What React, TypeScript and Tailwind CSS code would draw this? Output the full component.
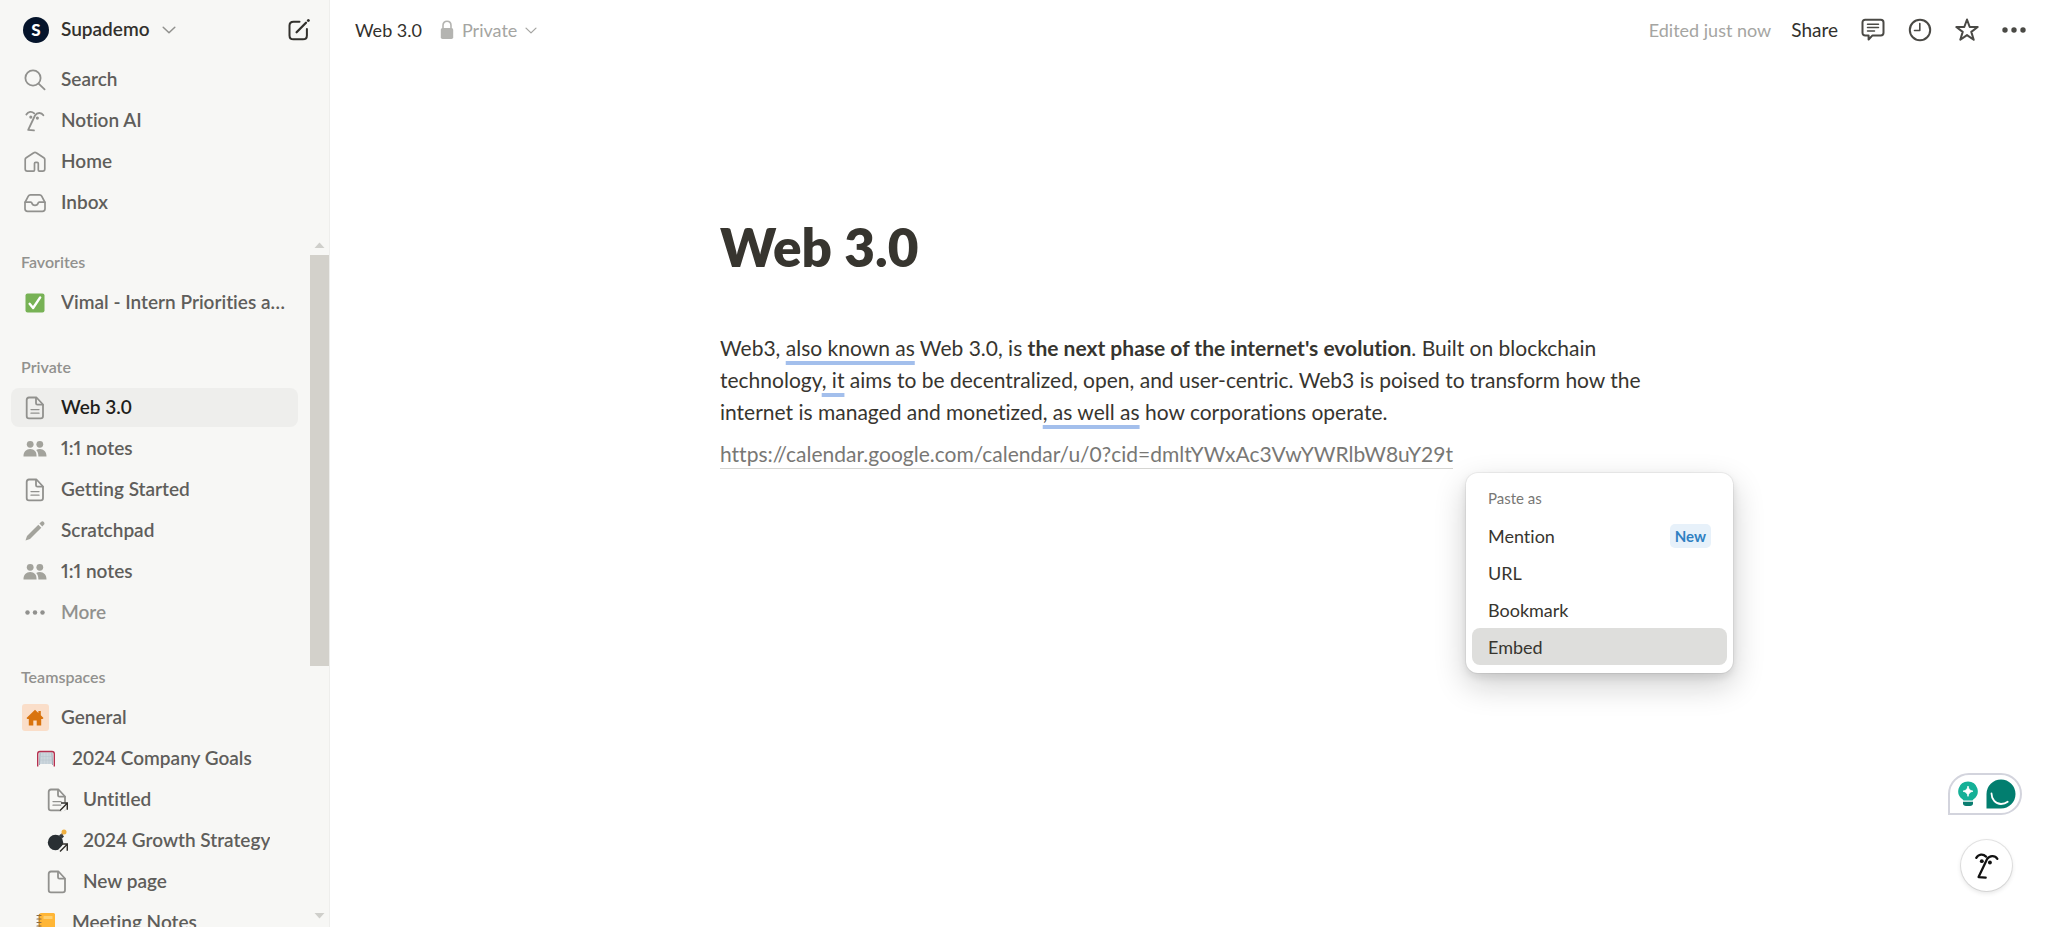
import type { ReactNode } from "react";

type IconProps = { className?: string };

function FaceIcon({ className = "" }: IconProps) {
  return (
    <svg viewBox="0 0 74 84" className={className} fill="none" stroke="currentColor" strokeWidth="7" strokeLinecap="round" strokeLinejoin="round" aria-hidden="true">
      <path d="M4 17C11 5 25 4 34 13" />
      <path d="M69 20C61 8 45 9 37 21L11 76L33 78" />
      <circle cx="21" cy="27" r="6" fill="currentColor" stroke="none" />
      <circle cx="46" cy="31" r="6" fill="currentColor" stroke="none" />
    </svg>
  );
}

function SearchIcon() {
  return (
    <svg viewBox="0 0 22 22" className="size-[22px]" fill="none" stroke="currentColor" strokeWidth="1.8" strokeLinecap="round" aria-hidden="true">
      <circle cx="9" cy="9" r="7.6" />
      <path d="M14.6 14.6L20.6 20.4" />
    </svg>
  );
}

function HomeIcon() {
  return (
    <svg viewBox="0 0 22 22" className="size-[22px]" fill="none" stroke="currentColor" strokeWidth="1.7" strokeLinejoin="round" strokeLinecap="round" aria-hidden="true">
      <path d="M1.2 8.6c0-.8.4-1.5 1-1.9L9.8 1.7c.7-.5 1.7-.5 2.400 0l7.600 5c.6.4 1 1.100 1 1.900v9.400c0 1.200-.9 2.100-2.100 2.100h-3.400c-.6 0-1-.4-1-1v-6.600c0-.8-.4-1.200-1.200-1.200h-1.400c-.8 0-1.200.4-1.200 1.200v6.600c0 .6-.4 1-1 1H3.300c-1.200 0-2.100-.9-2.100-2.100z" />
    </svg>
  );
}

function InboxIcon() {
  return (
    <svg viewBox="0 0 22 22" className="size-[22px]" fill="none" stroke="currentColor" strokeWidth="1.7" strokeLinejoin="round" strokeLinecap="round" aria-hidden="true">
      <path d="M1 10.500 4.300 4.200c.5-1 1.200-1.400 2.200-1.400h9c1 0 1.700.4 2.200 1.400L21 10.500v6.200c0 1.700-1 2.600-2.600 2.600H3.600C2 19.300 1 18.400 1 16.700z" />
      <path d="M1.200 10.200h5.600c.6 0 .9.400 1 .9.400 1.400 1.600 2.300 3.200 2.300s2.800-.9 3.200-2.300c.1-.5.4-.9 1-.9h5.600" />
    </svg>
  );
}

function PageIcon({ lines = true, arrow = false }: { lines?: boolean; arrow?: boolean }) {
  return (
    <svg viewBox="0 0 22 24" className="h-6 w-[22px]" fill="none" stroke="currentColor" strokeWidth="1.8" strokeLinejoin="round" strokeLinecap="round" aria-hidden="true">
      <path d="M5 1.500h7.500L19 8.500v11.500c0 1.500-.8 2.400-2.300 2.400H5c-1.500 0-2.300-.9-2.300-2.400V3.900C2.700 2.400 3.500 1.500 5 1.500z" />
      <path d="M12 1.800v5.400c0 1 .5 1.500 1.500 1.500h5.200" />
      {lines && <path d="M7 13.600h8M7 17.200h8" strokeWidth="1.300" />}
      {arrow && <ShortcutArrow />}
    </svg>
  );
}

function ShortcutArrow() {
  return (
    <g strokeLinecap="butt" strokeLinejoin="miter">
      <path d="M14.500 22.500 21 16" stroke="#f7f7f5" strokeWidth="6" />
      <path d="M14 22.500 21 15.500M15 15h6.300v6.800" fill="none" stroke="#32302c" strokeWidth="1.500" />
    </g>
  );
}

function PeopleIcon() {
  return (
    <svg viewBox="0 0 24 18" className="h-[18px] w-6" fill="#a3a39c" aria-hidden="true">
      <circle cx="7.200" cy="4.300" r="3.400" />
      <circle cx="16.800" cy="4.300" r="3.400" />
      <path d="M.5 16.500c0-4.600 2.700-7.400 6.700-7.400 2.200 0 3.700.8 4.800 2 1.200 1.300 1.500 3.200 1.600 5.400z" />
      <path d="M23.500 16.500c0-4.600-2.700-7.400-6.700-7.400-1.400 0-2.600.3-3.600.9 1.500 1.600 2.200 3.800 2.200 6.500z" />
    </svg>
  );
}

function PencilIcon() {
  return (
    <svg viewBox="0 0 22 22" className="size-[22px]" fill="#a3a39c" aria-hidden="true">
      <path d="M1.500 20.500 3 16 14.300 4.700l3 3L6 19z" />
      <path d="M15.400 3.600 17 2c.9-.9 2-.9 2.800 0 .9.900.9 2 .1 2.800l-1.600 1.700z" />
    </svg>
  );
}

function DotsIcon({ className = "" }: IconProps) {
  return (
    <svg viewBox="0 0 24 6" className={className} fill="currentColor" aria-hidden="true">
      <circle cx="3" cy="3" r="2.700" />
      <circle cx="12" cy="3" r="2.700" />
      <circle cx="21" cy="3" r="2.700" />
    </svg>
  );
}

function CheckBadge() {
  return (
    <svg viewBox="0 0 20 20" className="size-5" aria-hidden="true">
      <rect x=".5" y=".5" width="19" height="19" rx="2" fill="#77b255" />
      <path d="M4.600 10.800 8.100 15 15.200 4.400" fill="none" stroke="#fff" strokeWidth="2.400" strokeLinecap="round" strokeLinejoin="round" />
    </svg>
  );
}

function HouseBadge() {
  return (
    <span className="flex size-[27px] items-center justify-center rounded-[3px] bg-[#fadec9]">
      <svg viewBox="0 0 18 18" className="size-[18px]" fill="#d9730d" aria-hidden="true">
        <path d="M9 .8 12.400 4V2h2.400v4.300l2.700 2.600-.9 1h-1.400v6.600h-4.500v-5H7.300v5H2.800V9.900H1.400l-.9-1z" />
      </svg>
    </span>
  );
}

function GoalIcon() {
  return (
    <svg viewBox="0 0 20 20" className="size-5" aria-hidden="true">
      <path d="M4 3h12l.5 12h-13z" fill="#ccd6dd" />
      <path d="M4 3.500 3.500 16M16 3.500 16.500 16" stroke="#99aab5" strokeWidth="1" />
      <path d="M7 4v11M10 4v11M13 4v11M4 7.500h12M4 11h12" stroke="#b9c6cf" strokeWidth=".6" />
      <path d="M1.700 17.500V4.800c0-1.500.8-2.300 2.300-2.300h12c1.500 0 2.300.8 2.300 2.300v12.700" fill="none" stroke="#b5304f" strokeWidth="1.400" />
    </svg>
  );
}

function BombIcon() {
  return (
    <svg viewBox="0 0 22 24" className="h-6 w-[22px]" aria-hidden="true">
      <path d="M13 6.500 15.500 4.500 18 7.500 16 9.500z" fill="#31373d" />
      <circle cx="9.500" cy="13.500" r="7.700" fill="#292f33" />
      <path d="M15.500 6 17.500 3.500" stroke="#77624a" strokeWidth="1.500" />
      <circle cx="18" cy="3" r="2.500" fill="#f0b040" />
      <ShortcutArrow />
    </svg>
  );
}

function NotebookIcon() {
  return (
    <svg viewBox="0 0 22 22" className="size-[22px]" aria-hidden="true">
      <rect x="3.500" y="1.500" width="16.500" height="20" rx="2" fill="#d99220" />
      <rect x="5" y="1" width="15" height="18" rx="1.500" fill="#ffb636" />
      <rect x="8.500" y="4" width="9" height="3" rx=".5" fill="#ffd071" />
      <path d="M2 3.500h4M2 7h4M2 10.500h4M2 14h4M2 17.500h4" stroke="#8a6a45" strokeWidth="1.200" strokeLinecap="round" />
    </svg>
  );
}

function ChevronDown({ className = "" }: IconProps) {
  return (
    <svg viewBox="0 0 14 8" className={className} fill="none" stroke="currentColor" strokeWidth="1.500" strokeLinecap="round" strokeLinejoin="round" aria-hidden="true">
      <path d="M1.200 1.200 7 6.800l5.800-5.600" />
    </svg>
  );
}

function ComposeIcon() {
  return (
    <svg viewBox="0 0 22 22" className="size-[22px]" fill="none" stroke="#32302c" strokeWidth="2" strokeLinecap="round" strokeLinejoin="round" aria-hidden="true">
      <path d="M11.500 2.700H5.500C3.100 2.700 1.500 4.200 1.500 6.600v9.800c0 2.400 1.600 3.900 4 3.900h9.400c2.400 0 4-1.500 4-3.900V10" />
      <path d="M8.600 13.200 18 3.800" strokeWidth="2.300" />
      <path d="M20.300 1.600 20.400 1.500" strokeWidth="2.800" />
    </svg>
  );
}

type Item = { label: string; icon: ReactNode; depth?: 0 | 1 | 2; active?: boolean; muted?: boolean; narrowDigits?: boolean };

const shortcuts: Item[] = [
  { label: "Search", icon: <SearchIcon /> },
  { label: "Notion AI", icon: <FaceIcon className="h-[22px] w-5" /> },
  { label: "Home", icon: <HomeIcon /> },
  { label: "Inbox", icon: <InboxIcon /> },
];

const privatePages: Item[] = [
  { label: "Web 3.0", icon: <PageIcon />, active: true },
  { label: "1:1 notes", icon: <PeopleIcon />, narrowDigits: true },
  { label: "Getting Started", icon: <PageIcon /> },
  { label: "Scratchpad", icon: <PencilIcon /> },
  { label: "1:1 notes", icon: <PeopleIcon />, narrowDigits: true },
  { label: "More", icon: <DotsIcon className="h-[5px] w-5" />, muted: true },
];

const teamPages: Item[] = [
  { label: "General", icon: <HouseBadge /> },
  { label: "2024 Company Goals", icon: <GoalIcon />, depth: 1 },
  { label: "Untitled", icon: <PageIcon arrow />, depth: 2 },
  { label: "2024 Growth Strategy", icon: <BombIcon />, depth: 2 },
  { label: "New page", icon: <PageIcon lines={false} />, depth: 2 },
  { label: "Meeting Notes", icon: <NotebookIcon />, depth: 1 },
];

const indents = { 0: "pl-[10px]", 1: "pl-[21px]", 2: "pl-8" };

function NavRow({ item }: { item: Item }) {
  const tone = item.active ? "bg-[#eeeeec] text-[#1f1e1b]" : item.muted ? "text-[#91918e]" : "text-[#5f5e5b]";
  return (
    <li className="py-px">
      <a href="#" className={`flex h-[39px] items-center gap-3 rounded-lg pr-3 ${indents[item.depth ?? 0]} ${tone}`}>
        <span className={`flex w-7 shrink-0 items-center justify-center ${item.muted ? "" : "text-[#91918e]"}`}>{item.icon}</span>
        <span className={item.narrowDigits ? "truncate proportional-nums" : "truncate"}>{item.label}</span>
      </a>
    </li>
  );
}

function Section({ title, items }: { title: string; items: Item[] }) {
  return (
    <section>
      <h2 className="flex h-[41px] items-center pl-[10px] text-[16px] text-[#91918e]">{title}</h2>
      <ul>
        {items.map((item, i) => (
          <NavRow key={i} item={item} />
        ))}
      </ul>
    </section>
  );
}

function Sidebar() {
  return (
    <aside className="flex w-[330px] shrink-0 flex-col border-r border-[#eeeeec] bg-[#f7f7f5] text-[19px] font-semibold">
      <div className="flex h-[59px] items-center justify-between pr-[19px] pl-[23px]">
        <button type="button" className="flex items-center gap-3 text-[#32302c]">
          <span className="flex size-[26px] items-center justify-center rounded-full bg-[#05142b] text-[17px] font-black text-white">S</span>
          Supademo
          <ChevronDown className="h-2 w-[14px] text-[#91918e]" />
        </button>
        <button type="button" aria-label="New page">
          <ComposeIcon />
        </button>
      </div>
      <nav className="px-[11px]" aria-label="Shortcuts">
        <ul>
          {shortcuts.map((item) => (
            <NavRow key={item.label} item={item} />
          ))}
        </ul>
      </nav>
      <div className="mt-3 flex min-h-0 flex-1">
        <nav className="flex min-w-0 flex-1 flex-col gap-[23px] overflow-hidden pt-[6px] pr-3 pl-[11px]" aria-label="Pages">
          <Section title="Favorites" items={[{ label: "Vimal - Intern Priorities and Goals", icon: <CheckBadge /> }]} />
          <Section title="Private" items={privatePages} />
          <Section title="Teamspaces" items={teamPages} />
        </nav>
        <div className="flex w-[19px] flex-col items-center" aria-hidden="true">
          <svg viewBox="0 0 19 20" className="h-5 w-[19px] shrink-0" fill="#cfcfcb">
            <path d="M4.500 13 9.500 7.500 14.500 13z" />
          </svg>
          <div className="w-full flex-1">
            <div className="h-[63%] w-full bg-[#d3d1cb]" />
          </div>
          <svg viewBox="0 0 19 20" className="h-5 w-[19px] shrink-0" fill="#cfcfcb">
            <path d="M4.500 6 9.500 11.500 14.500 6z" />
          </svg>
        </div>
      </div>
    </aside>
  );
}

function TopBar() {
  return (
    <header className="flex h-[60px] shrink-0 items-center justify-between pr-[22px] pl-[25px] text-[18px]">
      <div className="flex items-center gap-[18px]">
        <a href="#" className="text-[#32302c]">Web 3.0</a>
        <button type="button" className="flex items-center gap-2 text-[#a5a5a2]">
          <svg viewBox="0 0 14 20" className="h-5 w-[14px]" aria-hidden="true">
            <path d="M3 9V5.500C3 2.800 4.600 1.200 7 1.200s4 1.600 4 4.300V9" fill="none" stroke="#b4b4b1" strokeWidth="1.600" />
            <rect x=".8" y="8" width="12.400" height="11" rx="1.700" fill="#b4b4b1" />
          </svg>
          Private
          <ChevronDown className="h-[7px] w-3" />
        </button>
      </div>
      <div className="flex items-center text-[#32302c]">
        <span className="mr-5 text-[#a5a5a2]">Edited just now</span>
        <button type="button" className="mr-[23px] text-[19px]">Share</button>
        <div className="flex items-center gap-[23px]">
          <button type="button" aria-label="Comments">
            <svg viewBox="0 0 24 24" className="size-6" fill="none" stroke="#4a4945" strokeWidth="2" strokeLinecap="round" strokeLinejoin="round" aria-hidden="true">
              <path d="M4.200 1.800h15.600c1.700 0 2.700 1 2.700 2.700v10.200c0 1.700-1 2.700-2.700 2.700h-8.300L7.600 21.500v-4.100H4.200c-1.700 0-2.700-1-2.700-2.700V4.500c0-1.700 1-2.700 2.700-2.700z" />
              <path d="M6.500 6.300h11M6.500 9.600h11M6.500 12.900h7" strokeWidth="1.500" />
            </svg>
          </button>
          <button type="button" aria-label="Updates">
            <svg viewBox="0 0 24 24" className="size-6" fill="none" stroke="#4a4945" strokeWidth="2" strokeLinecap="round" strokeLinejoin="round" aria-hidden="true">
              <circle cx="12" cy="12" r="10.200" />
              <path d="M11.800 5.500v7H6.500" strokeWidth="1.600" />
            </svg>
          </button>
          <button type="button" aria-label="Favorite">
            <svg viewBox="0 0 24 24" className="size-6" fill="none" stroke="#4a4945" strokeWidth="2" strokeLinejoin="round" aria-hidden="true">
              <path d="M12 1.500 14.700 9h8l-6.400 4.900 2.400 7.900L12 17.100l-6.700 4.700 2.400-7.900L1.300 9h8z" />
            </svg>
          </button>
          <button type="button" aria-label="More actions">
            <DotsIcon className="h-[6px] w-6 text-[#4a4945]" />
          </button>
        </div>
      </div>
    </header>
  );
}

function Flagged({ children }: { children: ReactNode }) {
  return <span className="underline decoration-[#a3bfec] decoration-4 underline-offset-[5px] [text-decoration-skip-ink:none]">{children}</span>;
}

function PasteMenu() {
  return (
    <div
      role="menu"
      className="absolute top-full left-[746px] mt-1 w-[267px] rounded-xl bg-white p-[6px] pb-2 text-[18px] text-[#37352f] shadow-[0_0_0_1px_rgba(15,15,15,0.05),0_4px_8px_rgba(15,15,15,0.1),0_12px_32px_rgba(15,15,15,0.2)]"
    >
      <p className="flex h-[38px] items-center px-4 text-[15px] text-[#787774]">Paste as</p>
      {["Mention", "URL", "Bookmark", "Embed"].map((label) => (
        <button
          key={label}
          type="button"
          role="menuitem"
          className={`flex h-[37px] w-full items-center justify-between rounded-lg px-4 ${label === "Embed" ? "bg-[#dededc]" : ""}`}
        >
          {label}
          {label === "Mention" && <span className="rounded-[5px] bg-[#e7f1fa] px-[5px] text-[15px] leading-6 font-bold text-[#2f80c2]">New</span>}
        </button>
      ))}
    </div>
  );
}

export default function App() {
  return (
    <div className="relative flex h-screen overflow-hidden bg-white font-['Lato','Liberation_Sans',sans-serif] text-[#37352f] [font-variant-ligatures:none]">
      <Sidebar />
      <main className="flex min-w-0 flex-1 flex-col">
        <TopBar />
        <article className="mx-auto w-full max-w-[938px] pt-[152px]">
          <h1 className="text-[53px] leading-[70px] font-extrabold">Web 3.0</h1>
          <p className="mt-[50px] text-[21px] leading-8">
            Web3, <Flagged>also known as</Flagged> Web 3.0, is <strong className="font-bold">the next phase of the internet's evolution</strong>. Built on blockchain technology<Flagged>, it</Flagged> aims to be decentralized, open, and user-centric. Web3 is poised to transform how the internet is managed and monetized<Flagged>, as well as</Flagged> how corporations operate.
          </p>
          <div className="relative mt-3 w-fit text-[21px] leading-7">
            <a href="#" className="block border-b border-[#d5d5d2] text-[#787774]">
              https://calendar.google.com/calendar/u/0?cid=dmltYWxAc3VwYWRlbW8uY29t
            </a>
            <PasteMenu />
          </div>
        </article>
      </main>
      <div className="absolute right-[26px] bottom-[112px] flex h-[42px] w-[74px] items-center justify-end gap-2 rounded-full rounded-bl-none border-2 border-[#d3d4dd] bg-white pr-1">
        <button type="button" aria-label="Suggestions">
          <svg viewBox="0 0 20 26" className="h-[26px] w-5" aria-hidden="true">
            <path d="M10 .5a9.700 9.700 0 0 1 5.500 17.700l-1 1.300h-9l-1-1.300A9.700 9.700 0 0 1 10 .5z" fill="#15b097" />
            <path d="M10 5c.6 3.200 1.800 4.500 5 5.200-3.200.7-4.400 2-5 5.200-.6-3.200-1.800-4.500-5-5.200C8.200 9.500 9.400 8.200 10 5z" fill="#fff" stroke="#fff" strokeWidth=".8" />
            <path d="M5 20.800h10v1.500c0 1.700-1.200 2.700-3 2.700H8c-1.800 0-3-1-3-2.700z" fill="#0a7d70" />
          </svg>
        </button>
        <button type="button" aria-label="Writing assistant">
          <svg viewBox="0 0 30 30" className="size-[30px]" aria-hidden="true">
            <path d="M15 .5A14.500 14.500 0 1 1 15 29.500H.5V15A14.500 14.500 0 0 1 15 .5z" fill="#027e6f" />
            <path d="M5.500 14.500c0 5.500 4 10.500 9.500 10.500 2.700 0 4.800-.7 6.700-2.200" fill="none" stroke="#fff" strokeWidth="1.800" strokeLinecap="round" />
          </svg>
        </button>
      </div>
      <button
        type="button"
        aria-label="Ask AI"
        className="absolute right-9 bottom-9 flex size-[51px] items-center justify-center rounded-full bg-white text-[#111111] shadow-[0_0_0_1px_rgba(15,15,15,0.1),0_2px_5px_rgba(15,15,15,0.12)]"
      >
        <FaceIcon className="h-7 w-6" />
      </button>
    </div>
  );
}
